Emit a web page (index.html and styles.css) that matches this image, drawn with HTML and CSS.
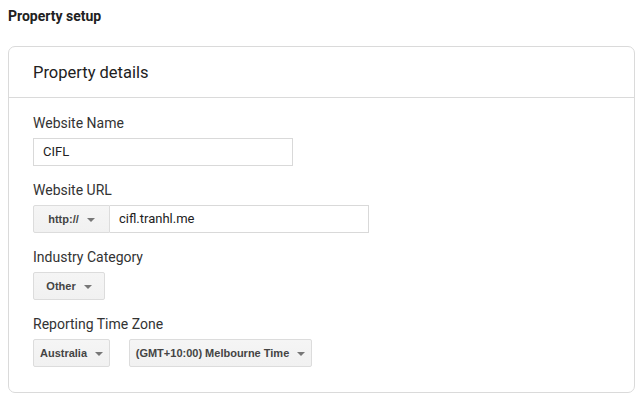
FILE: index.html
```html
<!DOCTYPE html>
<html>
<head>
<meta charset="utf-8">
<link rel="stylesheet" href="styles.css">
</head>
<body>
<h1 class="page-title">Property setup</h1>
<section class="card">
  <header class="card-head">Property details</header>
  <div class="card-body">
    <div class="field">
      <label class="label">Website Name</label>
      <div class="input name-input">CIFL</div>
    </div>
    <div class="field">
      <label class="label">Website URL</label>
      <div class="url-row">
        <div class="btn btn-proto">http://<span class="caret"></span></div>
        <div class="input url-input">cifl.tranhl.me</div>
      </div>
    </div>
    <div class="field">
      <label class="label">Industry Category</label>
      <div class="row"><div class="btn btn-other">Other<span class="caret"></span></div></div>
    </div>
    <div class="field">
      <label class="label">Reporting Time Zone</label>
      <div class="row tz-row">
        <div class="btn btn-country">Australia<span class="caret"></span></div>
        <div class="btn btn-zone">(GMT+10:00) Melbourne Time<span class="caret"></span></div>
      </div>
    </div>
  </div>
</section>
</body>
</html>
```
FILE: styles.css
```css
html, body { background: #fff; }
body {
  margin: 8px;
  font-family: Roboto, "Liberation Sans", sans-serif;
  color: #212121;
}
.page-title {
  margin: 0;
  font-size: 14px;
  font-weight: 700;
  line-height: 16px;
  color: #212121;
}
.card {
  margin-top: 22px;
  border: 1px solid #dadada;
  border-radius: 7px;
  box-sizing: border-box;
  width: 627px;
}
.card-head {
  height: 51px;
  box-sizing: border-box;
  padding: 16px 24px 0;
  font-size: 16.5px;
  line-height: 20px;
  color: #212121;
  border-bottom: 1px solid #dadada;
}
.card-body {
  padding: 15px 24px 25px;
}
.field { display: flex; flex-direction: column; align-items: flex-start; }
.field + .field { margin-top: 14px; }
.label {
  font-size: 14px;
  line-height: 20px;
  color: #333;
  margin-bottom: 5px;
}
.input {
  box-sizing: border-box;
  height: 28px;
  border: 1px solid #d9d9d9;
  background: #fff;
  font-size: 13px;
  line-height: 26px;
  padding: 0 9px;
  color: #222;
}
.name-input { width: 260px; }
.url-row { display: flex; }
.url-input { width: 259px; border-left: none; }
.row { display: flex; }
.tz-row { gap: 19px; }
.btn {
  box-sizing: border-box;
  height: 28px;
  display: flex;
  align-items: center;
  justify-content: center;
  white-space: nowrap;
  border: 1px solid #dcdcdc;
  border-radius: 2px;
  background: linear-gradient(#f5f5f5, #f1f1f1);
  font-family: "Liberation Sans", Arial, sans-serif;
  font-size: 11px;
  font-weight: 700;
  color: #444;
  padding: 0 14px;
}
.caret {
  display: inline-block;
  width: 0; height: 0;
  border-left: 4px solid transparent;
  border-right: 4px solid transparent;
  border-top: 4px solid #777;
  margin-left: 8px;
  margin-top: 1px;
}
.btn-proto { width: 77px; border-radius: 2px 0 0 2px; }
.btn-other { width: 72px; }
.btn-country { width: 77px; padding: 0 6px; }
.btn-zone { width: 183px; padding: 0 6px; }
```
